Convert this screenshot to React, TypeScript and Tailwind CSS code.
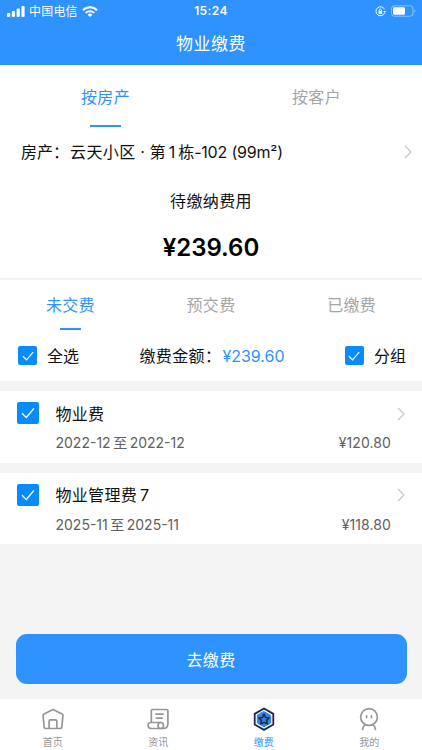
import type { ReactNode } from 'react'

interface Bill {
  name: string
  suffix?: string
  from: string
  to: string
  amount: string
}

const BILLS: Bill[] = [
  { name: '物业费', from: '2022-12', to: '2022-12', amount: '¥120.80' },
  { name: '物业管理费', suffix: '7', from: '2025-11', to: '2025-11', amount: '¥118.80' },
]

const STATUS_TABS = ['未交费', '预交费', '已缴费']

function Checkbox({ size }: { size: 'sm' | 'lg' }) {
  return (
    <span
      className={`flex shrink-0 items-center justify-center rounded-[2px] bg-[#088bff] text-white
        ${size === 'lg' ? 'h-[22px] w-[22px]' : 'h-[19px] w-[19px]'}`}
    >
      <svg className={size === 'lg' ? 'h-[14px] w-[14px]' : 'h-3 w-3'} viewBox="0 0 14 14" fill="none" stroke="currentColor" strokeWidth="1.4">
        <path d="M1 7.3 5.3 11.4 13 2.4" />
      </svg>
    </span>
  )
}

function Chevron() {
  return (
    <svg className="h-[14px] w-2 shrink-0" viewBox="0 0 8 14" fill="none" stroke="#c6c6c6" strokeWidth="1.2">
      <path d="M1 1l6 6-6 6" />
    </svg>
  )
}

function StatusBar() {
  return (
    <div className="flex h-[22px] items-center px-[7px] text-[12px] text-white">
      <div className="flex flex-1 items-center">
        <svg className="h-[11px] w-[18px]" viewBox="0 0 18 11" fill="currentColor">
          <rect x="0" y="7" width="3.2" height="4" rx="1" />
          <rect x="4.8" y="5" width="3.2" height="6" rx="1" />
          <rect x="9.6" y="2.6" width="3.2" height="8.4" rx="1" />
          <rect x="14.4" y="0" width="3.2" height="11" rx="1" />
        </svg>
        <span className="ml-1 pt-[1px] tracking-[0.2px]">中国电信</span>
        <svg className="ml-1 h-[11px] w-4" viewBox="0 0 16 11" fill="none" stroke="currentColor" strokeWidth="2">
          <path d="M1 4.2a10 10 0 0 1 14 0" />
          <path d="M3.7 6.9a6.2 6.2 0 0 1 8.6 0" />
          <path d="M8 11 5.6 8.7a3.5 3.5 0 0 1 4.8 0z" fill="currentColor" stroke="none" />
        </svg>
      </div>
      <span className="text-[12px] font-semibold tracking-[0.4px]">15:24</span>
      <div className="flex flex-1 items-center justify-end">
        <svg className="h-[11px] w-[11px]" viewBox="0 0 11 11" fill="none" stroke="currentColor">
          <path d="M9.6 3.4A4.5 4.5 0 1 0 9.8 6.6" strokeWidth="1" />
          <path d="M8.3 5h2.7L9.7 7z" fill="currentColor" stroke="none" />
          <rect x="3.6" y="5" width="3.6" height="2.9" rx="0.4" fill="currentColor" stroke="none" />
          <path d="M4.3 5V4.100a1.100 1.100 0 0 1 2.200 0V5" strokeWidth="0.8" />
        </svg>
        <svg className="-mr-[1px] ml-[5px] h-3 w-[25px]" viewBox="0 0 25 12" fill="none">
          <rect x="0.5" y="0.8" width="21.5" height="10.4" rx="2.8" stroke="#fff" strokeOpacity="0.45" />
          <rect x="2" y="2.3" width="12" height="7.4" rx="1.4" fill="#fff" />
          <path d="M23.5 4.3v3.4c.7-.3 1.1-.9 1.1-1.7s-.4-1.4-1.1-1.7z" fill="#fff" fillOpacity="0.5" />
        </svg>
      </div>
    </div>
  )
}

function BillCard({ bill }: { bill: Bill }) {
  return (
    <div className="flex h-[71.5px] bg-white pt-[11px] pr-[17px] pl-[17px]">
      <Checkbox size="lg" />
      <div className="ml-[16.5px] flex-1">
        <div className="flex h-[23px] items-center justify-between">
          <span className="text-[16px] tracking-[0.3px]">
            {bill.name}
            {bill.suffix && <span className="ml-[3px]">{bill.suffix}</span>}
          </span>
          <Chevron />
        </div>
        <div className="mt-[7px] flex h-[21px] items-center justify-between pr-[14px] text-[14px] text-[#606060]">
          <span className="flex">
            <span>{bill.from}</span>
            <span className="mx-[2.5px]">至</span>
            <span>{bill.to}</span>
          </span>
          <span className="tracking-[0.1px]">{bill.amount}</span>
        </div>
      </div>
    </div>
  )
}

function NavItem({ label, active, children }: { label: string; active?: boolean; children: ReactNode }) {
  return (
    <div className={`flex flex-1 flex-col items-center pt-2 ${active ? 'text-[#2e92ff]' : 'text-[#969696]'}`}>
      <svg className="h-6 w-6" viewBox="0 0 24 24" fill="none" stroke="currentColor" strokeWidth="1.7" strokeLinejoin="round" strokeLinecap="round">
        {children}
      </svg>
      <span className="mt-1 text-[10px] leading-[15px]">{label}</span>
    </div>
  )
}

export default function App() {
  return (
    <div className="flex h-[750px] w-[422px] flex-col overflow-hidden bg-[#f4f4f4] font-['Inter','Noto_Sans_CJK_SC',sans-serif] text-[#111]">
      <header className="h-[65px] bg-[#2e92ff] text-white">
        <StatusBar />
        <h1 className="flex h-[43px] items-center justify-center pt-[2px] text-[17px] tracking-[0.5px]">物业缴费</h1>
      </header>

      <section className="h-[213px] bg-white">
        <div className="flex h-[62px] text-[16px] tracking-[0.3px]">
          <div className="flex flex-1 flex-col items-center text-[#2e92ff]">
            <span className="flex h-[59.5px] items-center pt-1">按房产</span>
            <span className="h-[2px] w-[31px] bg-[#2e92ff]" />
          </div>
          <div className="flex flex-1 flex-col items-center text-[#a5a5a5]">
            <span className="flex h-[59.5px] items-center pt-1">按客户</span>
          </div>
        </div>
        <div className="flex h-[50px] items-center justify-between pr-[10px] pl-[21px] text-[16px]">
          <span className="flex">
            <span className="w-[49px]">房产：</span>
            <span className="tracking-[0.4px]">云天小区</span>
            <span className="w-[14px] text-center">·</span>
            <span>第</span>
            <span className="mx-[3px]">1</span>
            <span>栋</span>
            <span className="tracking-[-0.2px]">-102 (99m²)</span>
          </span>
          <Chevron />
        </div>
        <div className="flex h-[48px] items-center justify-center text-[16px] tracking-[0.4px]">待缴纳费用</div>
        <div className="flex h-[44px] items-center justify-center pt-[1px] text-[24px] font-semibold text-black">¥239.60</div>
      </section>

      <section className="mt-[2px] h-[101px] bg-white">
        <div className="flex h-[51px] text-[16px] tracking-[0.3px]">
          {STATUS_TABS.map((tab, i) => (
            <div key={tab} className={`flex flex-1 flex-col items-center ${i === 0 ? 'text-[#2e92ff]' : 'text-[#a5a5a5]'}`}>
              <span className="flex h-[48px] items-center pt-[2px]">{tab}</span>
              {i === 0 && <span className="h-[2px] w-[21px] bg-[#2e92ff]" />}
            </div>
          ))}
        </div>
        <div className="flex h-[50px] items-center justify-between pr-4 pb-[1px] pl-[18px] text-[16px]">
          <span className="flex items-center">
            <Checkbox size="sm" />
            <span className="ml-[10px]">全选</span>
          </span>
          <span className="flex items-center">
            <span className="w-[83px] tracking-[0.4px]">缴费金额：</span>
            <span className="text-[#2e92ff]">¥239.60</span>
          </span>
          <span className="flex items-center">
            <Checkbox size="sm" />
            <span className="ml-[10px]">分组</span>
          </span>
        </div>
      </section>

      <div className="mt-[10px] flex flex-1 flex-col gap-[10px]">
        {BILLS.map(bill => (
          <BillCard key={bill.name} bill={bill} />
        ))}
      </div>

      <div className="px-[15.5px] pb-[15px]">
        <button className="h-[50px] w-full rounded-[11px] bg-[#2e92ff] pt-[2px] text-[16px] tracking-[0.3px] text-white">去缴费</button>
      </div>

      <nav className="flex h-[51px] bg-white">
        <NavItem label="首页">
          <path d="M12 2.500 21 7c.7.4 1 .9.9 1.700l-1 11c-.1 1.200-.9 1.800-2 1.800H5.100c-1.100 0-1.900-.6-2-1.800l-1-11C2 7.900 2.300 7.400 3 7z" />
          <path d="M8.100 21.200v-7c0-.8.4-1.300 1.300-1.300h5.200c.9 0 1.300.5 1.300 1.300v7" />
        </NavItem>
        <NavItem label="资讯">
          <path d="M5.300 15.500V3.700c0-.8.4-1.200 1.200-1.200h14.200c.8 0 1.200.4 1.200 1.200v13c0 3.100-1.700 4.800-4.600 4.800H5a3 3 0 0 1 0-6h10" />
          <rect x="12.100" y="15.500" width="5.300" height="6" rx="2.600" />
          <path d="M10 7.200h7M10.500 11.200h5.500" />
        </NavItem>
        <NavItem label="缴费" active>
          <path d="M12 1.500 21.300 6.900v10.600L12 22.900 2.700 17.500V6.900z" fill="#fff" stroke="#1d2a42" strokeWidth="1.800" />
          <path d="M12 4.600 18.700 8.400v7.600L12 19.800 5.300 16V8.400z" fill="#2e82ed" stroke="#2e82ed" strokeWidth="1" />
          <path d="m12 7.200 1.600 3.200 3.600.5-2.600 2.500.6 3.500-3.200-1.600-3.200 1.600.6-3.500-2.600-2.500 3.600-.5z" stroke="#1d2a42" strokeWidth="1.500" />
        </NavItem>
        <NavItem label="我的">
          <circle cx="12" cy="10" r="8.400" />
          <path d="M9.600 8.800v1.600M14.400 8.800v1.600M8.300 17.700c-1.700.9-2.600 2.600-2.800 4.800M15.700 17.700c1.700.9 2.600 2.600 2.800 4.800" />
        </NavItem>
      </nav>
    </div>
  )
}
